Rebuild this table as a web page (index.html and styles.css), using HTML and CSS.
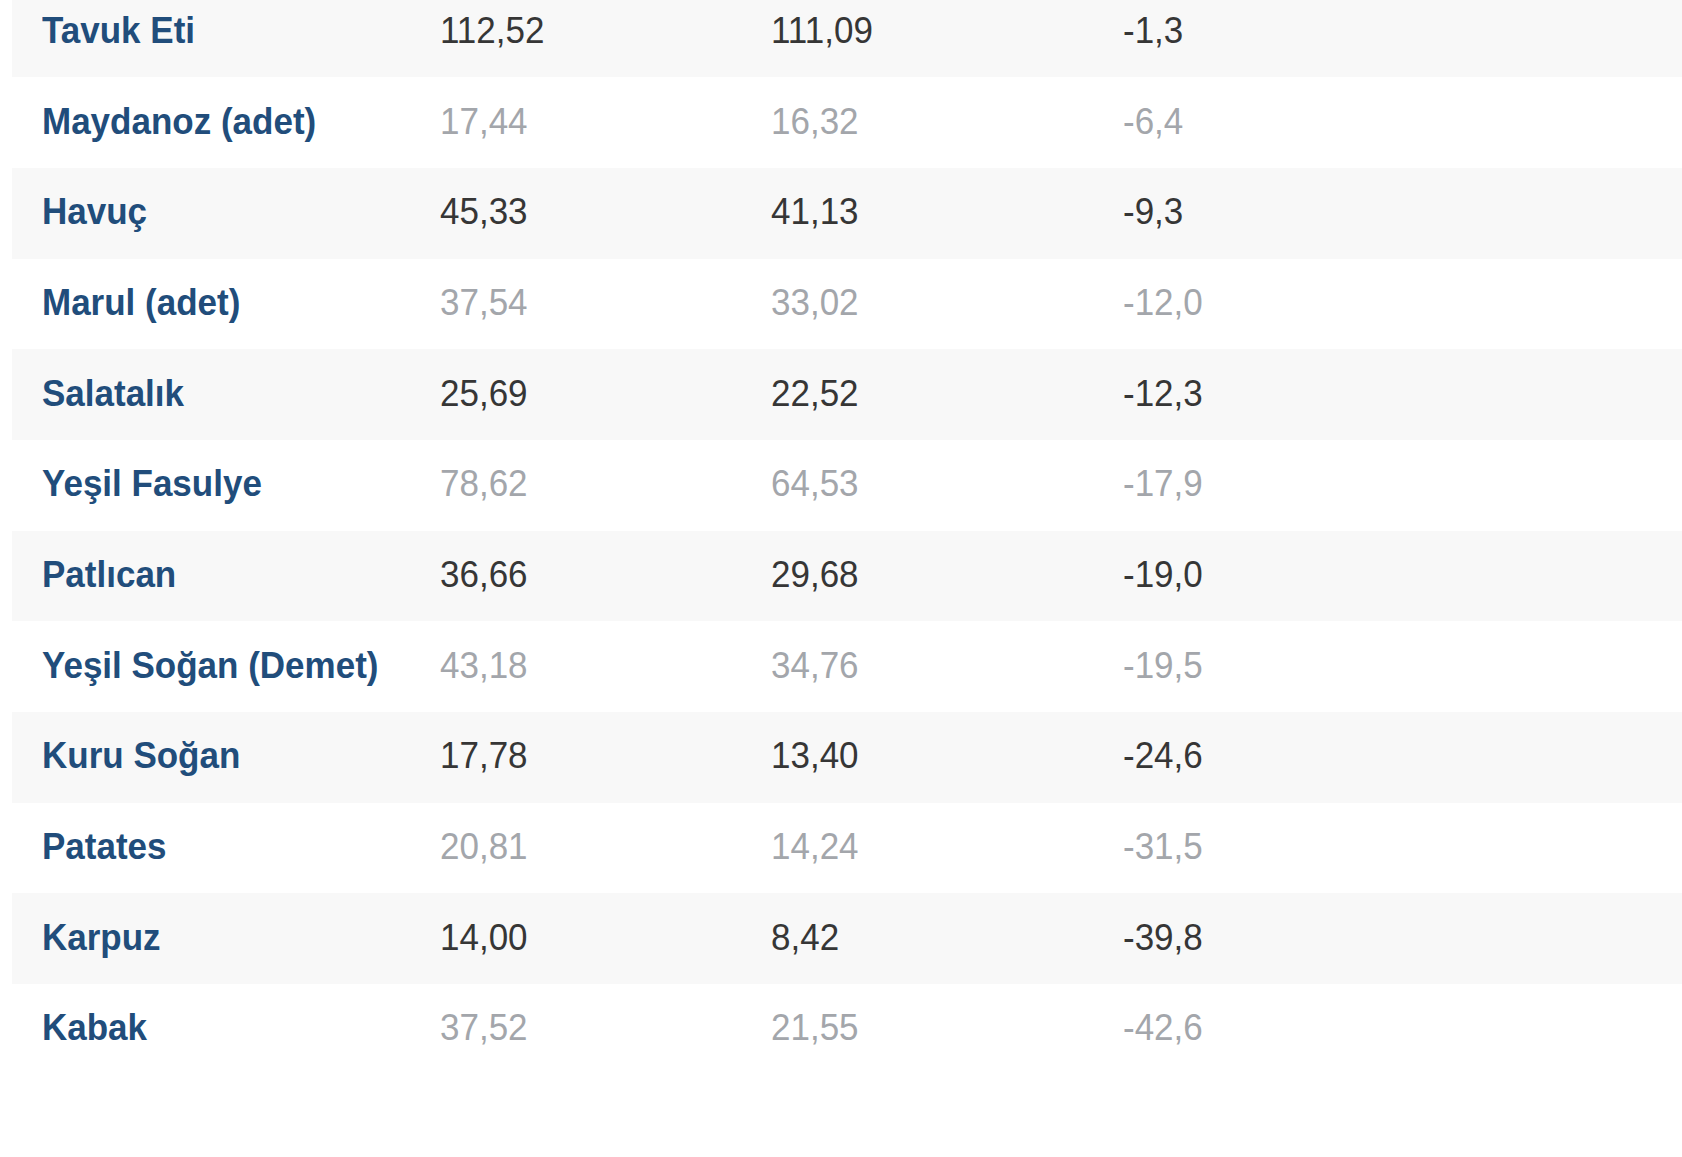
FILE: index.html
```html
<!DOCTYPE html>
<html lang="tr">
<head>
<meta charset="utf-8">
<title>Fiyat Tablosu</title>
<link rel="stylesheet" href="styles.css">
</head>
<body>
<div class="price-table">
  <div class="row shaded"><span class="name">Tavuk Eti</span><span class="num">112,52</span><span class="num">111,09</span><span class="num">-1,3</span></div>
  <div class="row light"><span class="name">Maydanoz (adet)</span><span class="num">17,44</span><span class="num">16,32</span><span class="num">-6,4</span></div>
  <div class="row shaded"><span class="name">Havuç</span><span class="num">45,33</span><span class="num">41,13</span><span class="num">-9,3</span></div>
  <div class="row light"><span class="name">Marul (adet)</span><span class="num">37,54</span><span class="num">33,02</span><span class="num">-12,0</span></div>
  <div class="row shaded"><span class="name">Salatalık</span><span class="num">25,69</span><span class="num">22,52</span><span class="num">-12,3</span></div>
  <div class="row light"><span class="name">Yeşil Fasulye</span><span class="num">78,62</span><span class="num">64,53</span><span class="num">-17,9</span></div>
  <div class="row shaded"><span class="name">Patlıcan</span><span class="num">36,66</span><span class="num">29,68</span><span class="num">-19,0</span></div>
  <div class="row light"><span class="name">Yeşil Soğan (Demet)</span><span class="num">43,18</span><span class="num">34,76</span><span class="num">-19,5</span></div>
  <div class="row shaded"><span class="name">Kuru Soğan</span><span class="num">17,78</span><span class="num">13,40</span><span class="num">-24,6</span></div>
  <div class="row light"><span class="name">Patates</span><span class="num">20,81</span><span class="num">14,24</span><span class="num">-31,5</span></div>
  <div class="row shaded"><span class="name">Karpuz</span><span class="num">14,00</span><span class="num">8,42</span><span class="num">-39,8</span></div>
  <div class="row light"><span class="name">Kabak</span><span class="num">37,52</span><span class="num">21,55</span><span class="num">-42,6</span></div>
</div>
</body>
</html>
```

FILE: styles.css
```css
html, body {
  margin: 0;
  padding: 0;
  background: #ffffff;
  overflow: hidden;
}

body {
  font-family: "Liberation Sans", Arial, sans-serif;
  font-size: 35px;
}

.price-table {
  margin-top: -13.5px;
  margin-left: 12px;
  display: flex;
  flex-direction: column;
}

.row {
  display: grid;
  grid-template-columns: 398px 331px 352px 1fr;
  align-items: center;
  box-sizing: border-box;
  height: 90.7px;
  padding-left: 30px;
  padding-bottom: 4px;
}

.row.shaded {
  background: #f8f8f8;
}

.name,
.num {
  display: inline-block;
  justify-self: start;
  transform: scaleY(1.08);
  transform-origin: center;
}

.name {
  font-weight: bold;
  color: #214d7b;
}

.num {
  font-weight: normal;
}

.shaded .num {
  color: #363636;
}

.light .num {
  color: #a3a6ab;
}
```
